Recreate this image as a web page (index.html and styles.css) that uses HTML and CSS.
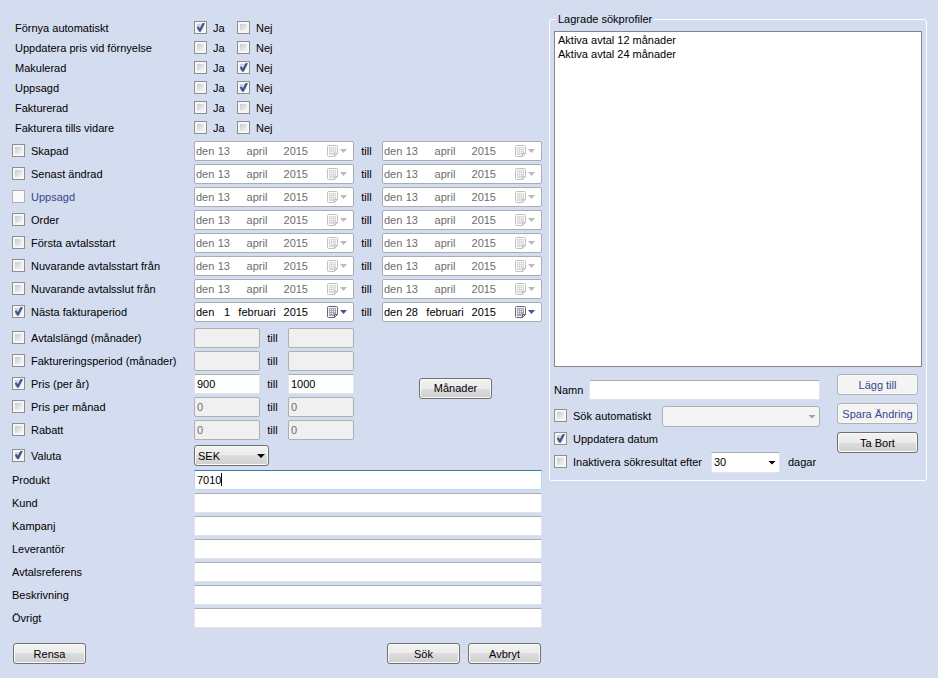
FILE: index.html
```html
<!DOCTYPE html>
<html lang="sv">
<head>
<meta charset="utf-8">
<title>Sök avtal</title>
<link rel="stylesheet" href="styles.css">
</head>
<body>
<svg class="defs" aria-hidden="true">
  <symbol id="cal" viewBox="0 0 20 12">
    <path d="M.5 1.500q0-1 1-1h8q1 0 1 1v7l-3 3h-6q-1 0-1-1z" fill="#f4f6fa" stroke="currentColor"/>
    <path d="M2 2h7v6H7v2H2z" fill="#a3a8b4"/>
    <path d="M3 3h1v1H3zM5 3h1v1H5zM7 3h1v1H7zM3 5h1v1H3zM5 5h1v1H5zM7 5h1v1H7zM3 7h1v1H3zM5 7h1v1H5z" fill="#f4f6fa"/>
    <path d="M7.500 11.500v-3h3z" fill="#d0d0d6" stroke="currentColor"/>
    <path d="M13 4h7l-3.500 4z"/>
  </symbol>
</svg>
<form class="page">
  <div class="criteria">
    <div class="flags">
      <div class="row"><span class="name">Förnya automatiskt</span><label><input type="checkbox" checked>Ja</label><label><input type="checkbox">Nej</label></div>
      <div class="row"><span class="name">Uppdatera pris vid förnyelse</span><label><input type="checkbox">Ja</label><label><input type="checkbox">Nej</label></div>
      <div class="row"><span class="name">Makulerad</span><label><input type="checkbox">Ja</label><label><input type="checkbox" checked>Nej</label></div>
      <div class="row"><span class="name">Uppsagd</span><label><input type="checkbox">Ja</label><label><input type="checkbox" checked>Nej</label></div>
      <div class="row"><span class="name">Fakturerad</span><label><input type="checkbox">Ja</label><label><input type="checkbox">Nej</label></div>
      <div class="row"><span class="name">Fakturera tills vidare</span><label><input type="checkbox">Ja</label><label><input type="checkbox">Nej</label></div>
    </div>

    <div class="group">
      <div class="row"><label class="name"><input type="checkbox">Skapad</label>
        <button type="button" class="date" disabled><span>den</span><span>13</span><span>april</span><span>2015</span><svg><use href="#cal"/></svg></button><span class="to">till</span>
        <button type="button" class="date" disabled><span>den</span><span>13</span><span>april</span><span>2015</span><svg><use href="#cal"/></svg></button></div>
      <div class="row"><label class="name"><input type="checkbox">Senast ändrad</label>
        <button type="button" class="date" disabled><span>den</span><span>13</span><span>april</span><span>2015</span><svg><use href="#cal"/></svg></button><span class="to">till</span>
        <button type="button" class="date" disabled><span>den</span><span>13</span><span>april</span><span>2015</span><svg><use href="#cal"/></svg></button></div>
      <div class="row"><label class="name off"><input type="checkbox" disabled>Uppsagd</label>
        <button type="button" class="date" disabled><span>den</span><span>13</span><span>april</span><span>2015</span><svg><use href="#cal"/></svg></button><span class="to">till</span>
        <button type="button" class="date" disabled><span>den</span><span>13</span><span>april</span><span>2015</span><svg><use href="#cal"/></svg></button></div>
      <div class="row"><label class="name"><input type="checkbox">Order</label>
        <button type="button" class="date" disabled><span>den</span><span>13</span><span>april</span><span>2015</span><svg><use href="#cal"/></svg></button><span class="to">till</span>
        <button type="button" class="date" disabled><span>den</span><span>13</span><span>april</span><span>2015</span><svg><use href="#cal"/></svg></button></div>
      <div class="row"><label class="name"><input type="checkbox">Första avtalsstart</label>
        <button type="button" class="date" disabled><span>den</span><span>13</span><span>april</span><span>2015</span><svg><use href="#cal"/></svg></button><span class="to">till</span>
        <button type="button" class="date" disabled><span>den</span><span>13</span><span>april</span><span>2015</span><svg><use href="#cal"/></svg></button></div>
      <div class="row"><label class="name"><input type="checkbox">Nuvarande avtalsstart från</label>
        <button type="button" class="date" disabled><span>den</span><span>13</span><span>april</span><span>2015</span><svg><use href="#cal"/></svg></button><span class="to">till</span>
        <button type="button" class="date" disabled><span>den</span><span>13</span><span>april</span><span>2015</span><svg><use href="#cal"/></svg></button></div>
      <div class="row"><label class="name"><input type="checkbox">Nuvarande avtalsslut från</label>
        <button type="button" class="date" disabled><span>den</span><span>13</span><span>april</span><span>2015</span><svg><use href="#cal"/></svg></button><span class="to">till</span>
        <button type="button" class="date" disabled><span>den</span><span>13</span><span>april</span><span>2015</span><svg><use href="#cal"/></svg></button></div>
      <div class="row"><label class="name"><input type="checkbox" checked>Nästa fakturaperiod</label>
        <button type="button" class="date"><span>den</span><span>1</span><span>februari</span><span>2015</span><svg><use href="#cal"/></svg></button><span class="to">till</span>
        <button type="button" class="date"><span>den</span><span>28</span><span>februari</span><span>2015</span><svg><use href="#cal"/></svg></button></div>
    </div>

    <div class="numbers">
      <div class="group">
        <div class="row"><label class="name"><input type="checkbox">Avtalslängd (månader)</label><input class="field num" type="text" aria-label="Avtalslängd från" disabled><span class="to">till</span><input class="field num" type="text" aria-label="Avtalslängd till" disabled></div>
        <div class="row"><label class="name"><input type="checkbox">Faktureringsperiod (månader)</label><input class="field num" type="text" aria-label="Faktureringsperiod från" disabled><span class="to">till</span><input class="field num" type="text" aria-label="Faktureringsperiod till" disabled></div>
        <div class="row"><label class="name"><input type="checkbox" checked>Pris (per år)</label><input class="field num" type="text" aria-label="Pris från" value="900"><span class="to">till</span><input class="field num" type="text" aria-label="Pris till" value="1000"></div>
        <div class="row"><label class="name"><input type="checkbox">Pris per månad</label><input class="field num" type="text" aria-label="Pris per månad från" value="0" disabled><span class="to">till</span><input class="field num" type="text" aria-label="Pris per månad till" value="0" disabled></div>
        <div class="row"><label class="name"><input type="checkbox">Rabatt</label><input class="field num" type="text" aria-label="Rabatt från" value="0" disabled><span class="to">till</span><input class="field num" type="text" aria-label="Rabatt till" value="0" disabled></div>
      </div>
      <button type="button" class="btn">Månader</button>
    </div>

    <div class="row currency"><label class="name"><input type="checkbox" checked>Valuta</label><span class="combo raised"><select aria-label="Valuta"><option>SEK</option></select></span></div>

    <div class="group">
      <div class="row"><label class="name" for="produkt">Produkt</label><span class="wide active"><input class="field" id="produkt" type="text" value="7010"><i class="caret"></i></span></div>
      <div class="row"><label class="name" for="kund">Kund</label><input class="field wide" id="kund" type="text"></div>
      <div class="row"><label class="name" for="kampanj">Kampanj</label><input class="field wide" id="kampanj" type="text"></div>
      <div class="row"><label class="name" for="leverantor">Leverantör</label><input class="field wide" id="leverantor" type="text"></div>
      <div class="row"><label class="name" for="avtalsreferens">Avtalsreferens</label><input class="field wide" id="avtalsreferens" type="text"></div>
      <div class="row"><label class="name" for="beskrivning">Beskrivning</label><input class="field wide" id="beskrivning" type="text"></div>
      <div class="row"><label class="name" for="ovrigt">Övrigt</label><input class="field wide" id="ovrigt" type="text"></div>
    </div>

    <div class="actions">
      <button type="reset" class="btn">Rensa</button>
      <button type="button" class="btn push">Sök</button>
      <button type="button" class="btn">Avbryt</button>
    </div>
  </div>

  <fieldset class="profiles">
    <legend>Lagrade sökprofiler</legend>
    <select class="list" size="24" aria-label="Lagrade sökprofiler">
      <option>Aktiva avtal 12 månader</option>
      <option>Aktiva avtal 24 månader</option>
    </select>
    <div class="editor">
      <div class="settings">
        <div class="row"><label class="caption" for="namn">Namn</label><input class="field wide" id="namn" type="text"></div>
        <div class="group">
          <div class="row"><label class="option"><input type="checkbox">Sök automatiskt</label><span class="combo dim"><select aria-label="Intervall" disabled><option></option></select></span></div>
          <div class="row"><label class="option"><input type="checkbox" checked>Uppdatera datum</label></div>
          <div class="row"><label class="option long"><input type="checkbox">Inaktivera sökresultat efter</label><span class="combo flat"><select id="dagar" aria-label="Antal dagar"><option>30</option></select></span><label class="unit" for="dagar">dagar</label></div>
        </div>
      </div>
      <div class="buttons">
        <button type="button" class="btn" disabled>Lägg till</button>
        <button type="button" class="btn" disabled>Spara Ändring</button>
        <button type="button" class="btn">Ta Bort</button>
      </div>
    </div>
  </fieldset>
</form>
</body>
</html>
```
FILE: styles.css
```css
* { box-sizing: border-box; }

body {
  margin: 0;
  background: #d4dcef;
  color: #000;
}

body, input, select, button {
  font: 11px/14px "Liberation Sans", Arial, sans-serif;
}

.defs { position: absolute; width: 0; height: 0; }

.page {
  display: grid;
  grid-template-columns: 530fr 378fr;
  column-gap: 7px;
  align-items: start;
  padding: 12px 11px 14px 12px;
}

.criteria { padding-top: 6px; }

.row { display: flex; align-items: center; height: 20px; }
.group { display: flex; flex-direction: column; gap: 3px; }

.name { flex: 0 0 182px; display: flex; align-items: flex-start; white-space: nowrap; }
.name.off { color: #37478c; }

.flags { margin-bottom: 3px; }
.flags .name { padding-left: 3px; }
.flags label { display: flex; align-items: flex-start; width: 43px; }

input[type="checkbox"] {
  appearance: none;
  position: relative;
  flex: none;
  width: 13px;
  height: 13px;
  margin: 0 6px 0 0;
  padding: 2px;
  border: 1px solid #8e8f8f;
  border-radius: 0;
  background: linear-gradient(135deg, #c6cad2, #f6f6f6) content-box, #f6f6f6;
}
input[type="checkbox"]:checked::after {
  content: "";
  position: absolute;
  inset: 1px;
  background: #3f5590;
  clip-path: polygon(8% 50%, 28% 36%, 42% 58%, 74% 0, 100% 4%, 52% 98%, 36% 98%);
}
input[type="checkbox"]:disabled { border-color: #b1b1b1; background: #f9f9f9; }

.to { flex: 0 0 28px; text-align: center; padding-right: 3px; }

.date {
  display: grid;
  grid-template-columns: 18px 16px 47px 31px 1fr;
  align-items: center;
  flex: 0 0 160px;
  height: 20px;
  padding: 0 6px 0 1px;
  border: 1px solid #abadb3;
  border-radius: 2px;
  background: #fff;
  color: #000;
}
.date span { text-align: left; }
.date span:nth-child(2) { text-align: right; }
.date span:nth-child(3) { text-align: center; padding-left: 7px; }
.date span:nth-child(4) { text-align: right; }
.date svg { width: 20px; height: 12px; justify-self: end; color: #6b6470; fill: #3f5687; }
.date:disabled { color: #6d6d6d; }
.date:disabled svg { filter: grayscale(1); opacity: .4; }

.field {
  height: 20px;
  min-width: 0;
  padding: 0 2px;
  border: 1px solid #e2e3ea;
  border-top-color: #abadb3;
  border-radius: 1px;
  background: #fff;
  color: #000;
}
.num { flex: 0 0 66px; }
.field:disabled {
  border-color: #afafaf;
  border-radius: 2px;
  background: #f0f0f0;
  color: #6d6d6d;
}
.wide { flex: 1; }
.active { position: relative; display: flex; }
.active .field { flex: 1; border-color: #b7d9ed; border-top-color: #3d7bad; }
.caret { position: absolute; left: 27px; top: 3px; width: 1px; height: 13px; background: #000; }

.numbers { display: flex; align-items: center; margin-top: 6px; }
.numbers .group { flex: 0 0 342px; }
.numbers .btn { margin: 8px 0 0 65px; }

.currency { height: 21px; margin: 5px 0 4px; }

.combo { position: relative; display: flex; flex: none; width: 75px; height: 21px; }
.combo::after {
  content: "";
  position: absolute;
  right: 4px;
  top: 9px;
  width: 8px;
  height: 4px;
  background: #000;
  clip-path: polygon(0 0, 100% 0, 50% 100%);
}
.combo select {
  appearance: none;
  flex: 1;
  min-width: 0;
  padding: 0 3px;
  border: 1px solid #707070;
  border-radius: 3px;
  color: #000;
}
.raised select, .btn {
  background: linear-gradient(#f2f2f2, #ebebeb 50%, #dddddd 50%, #cfcfcf);
  box-shadow: inset 0 0 0 1px #fafafa;
}
.combo.dim { flex: 1; }
.dim select:disabled { border-color: #adb2b5; background: #f4f4f4; opacity: 1; }
.dim::after { background: #a0a0a0; }
.combo.flat { width: 69px; }
.flat select { border: 1px solid #e2e3ea; border-top-color: #abadb3; border-radius: 0; background: #fff; padding: 0 2px; }

.btn {
  flex: none;
  width: 73px;
  height: 21px;
  padding: 0;
  border: 1px solid #707070;
  border-radius: 3px;
  color: #000;
  text-align: center;
}
.btn:disabled { border-color: #adb2b5; background: #f4f4f4; color: #37478c; }

.actions { display: flex; gap: 8px; margin-top: 15px; padding: 0 1px; }
.push { margin-left: auto; }

.profiles {
  min-width: 0;
  margin: 0;
  padding: 5px 4px 8px;
  border: 1px solid #fff;
  border-radius: 3px;
}
.profiles legend { margin-left: 2px; padding: 0 2px; }

.list {
  display: block;
  width: 100%;
  height: 336px;
  padding: 2px 0;
  border: 1px solid #828790;
  border-radius: 0;
  background: #fff;
  color: #000;
  overflow: hidden;
}
.list option { padding: 0 3px; min-height: 14px; line-height: 14px; }

.editor { display: flex; justify-content: space-between; gap: 17px; padding: 7px 4px 0 0; }
.settings { flex: 1; display: flex; flex-direction: column; gap: 6px; padding-top: 6px; }
.caption { flex: 0 0 35px; }
.option { flex: 0 0 108px; display: flex; align-items: flex-start; white-space: nowrap; }
.long { flex-basis: 157px; }
.unit { margin-left: 8px; }
.buttons { display: flex; flex-direction: column; gap: 8px; }
.buttons .btn { width: 81px; }
```
